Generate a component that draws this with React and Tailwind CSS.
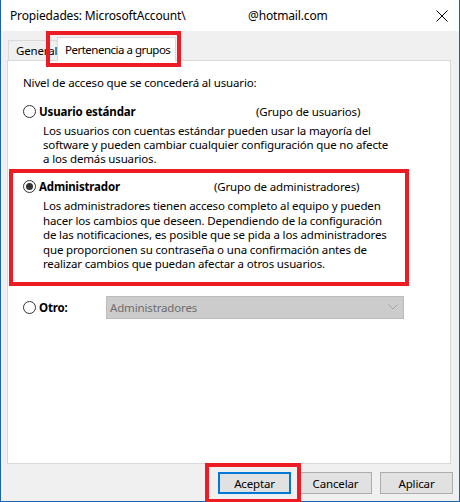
import React from "react";

function Radio({ checked }) {
  return (
    <span className="w-[13px] h-[13px] rounded-full border border-[#333333] bg-white flex items-center justify-center shrink-0">
      {checked && <span className="w-[7px] h-[7px] rounded-full bg-[#333333]" />}
    </span>
  );
}

function Btn({ children, primary }) {
  return (
    <div
      className={
        primary
          ? "w-[73px] h-[22px] bg-[#e1e1e1] border-2 border-[#0078d7] flex items-center justify-center"
          : "w-[73px] h-[22px] bg-[#e1e1e1] border border-[#adadad] flex items-center justify-center"
      }
    >
      {children}
    </div>
  );
}

export default function App() {
  return (
    <div className="w-[460px] h-[502px] bg-[#f0f0f0] border-x border-b border-[#1b63ab] flex flex-col relative font-['Noto_Sans',sans-serif] text-[11.5px] tracking-[-0.15px] text-black leading-[15px]">
      {/* Title bar */}
      <div className="h-[31px] bg-white flex items-center pl-[9px] shrink-0">
        <span className="w-[238px] whitespace-nowrap text-[12px]">Propiedades: MicrosoftAccount\</span>
        <span className="whitespace-nowrap text-[12px]">@hotmail.com</span>
        <svg className="ml-auto mr-[11px]" width="12" height="12" viewBox="0 0 12 12">
          <path d="M0.5 0.5 L11.5 11.5 M11.5 0.5 L0.5 11.5" stroke="#000" strokeWidth="1" fill="none" />
        </svg>
      </div>

      {/* Tabs */}
      <div className="h-[29px] flex items-end pl-[7px] shrink-0">
        <div className="h-[20px] w-[49px] border-t border-l border-[#d9d9d9] bg-[#f0f0f0] pl-[7px] flex items-center overflow-hidden whitespace-nowrap">
          General
        </div>
        <div className="h-[24px] w-[119px] -mb-px border-t border-l border-r border-[#d9d9d9] bg-white pl-[7px] flex items-center whitespace-nowrap relative z-10 tracking-[-0.5px]">
          Pertenencia a grupos
        </div>
      </div>

      {/* Panel */}
      <div className="ml-[6px] w-[444px] h-[404px] border border-[#d9d9d9] bg-white shrink-0 flex flex-col">
        <div className="pl-[15px] pt-[14px] whitespace-nowrap">Nivel de acceso que se concederá al usuario:</div>

        <div className="pl-[15px] mt-[14px] flex items-center whitespace-nowrap">
          <Radio />
          <span className="ml-[3px] w-[217px] font-bold">Usuario estándar</span>
          <span>(Grupo de usuarios)</span>
        </div>
        <div className="pl-[35px] mt-[5px] leading-[14px] whitespace-nowrap">
          Los usuarios con cuentas estándar pueden usar la mayoría del
          <br />
          software y pueden cambiar cualquier configuración que no afecte
          <br />a los demás usuarios.
        </div>

        <div className="ml-px mt-[3px] w-[400px] border-4 border-[#ed1c24] pt-[6px] pb-[10px]">
          <div className="pl-[10px] flex items-center whitespace-nowrap">
            <Radio checked />
            <span className="ml-[3px] w-[175px] font-bold">Administrador</span>
            <span>(Grupo de administradores)</span>
          </div>
          <div className="pl-[30px] mt-[5px] leading-[14.5px] whitespace-nowrap">
            Los administradores tienen acceso completo al equipo y pueden
            <br />
            hacer los cambios que deseen. Dependiendo de la configuración
            <br />
            de las notificaciones, es posible que se pida a los administradores
            <br />
            que proporcionen su contraseña o una confirmación antes de
            <br />
            realizar cambios que puedan afectar a otros usuarios.
          </div>
        </div>

        <div className="pl-[15px] mt-[10px] flex items-center whitespace-nowrap">
          <Radio />
          <span className="ml-[3px] w-[67px] font-bold">Otro:</span>
          <div className="w-[298px] h-[23px] bg-[#cccccc] border border-[#bcbcbc] flex items-center pl-[3px] pr-[5px] text-[#6d6d6d]">
            <span>Administradores</span>
            <svg className="ml-auto" width="10" height="6" viewBox="0 0 10 6">
              <path d="M0.5 0.5 L5 5 L9.5 0.5" stroke="#a6a6a6" strokeWidth="1" fill="none" />
            </svg>
          </div>
        </div>
      </div>

      {/* Buttons */}
      <div className="flex justify-end gap-[8px] pr-[6px] pt-[8px]">
        <Btn primary>Aceptar</Btn>
        <Btn>Cancelar</Btn>
        <Btn>Aplicar</Btn>
      </div>

      {/* Annotation overlays */}
      <div className="absolute left-[45px] top-[31px] w-[135px] h-[36px] border-4 border-[#ed1c24] z-20 pointer-events-none" />
      <div className="absolute left-[204px] top-[463px] w-[96px] h-[40px] border-4 border-[#ed1c24] z-20 pointer-events-none" />
    </div>
  );
}
